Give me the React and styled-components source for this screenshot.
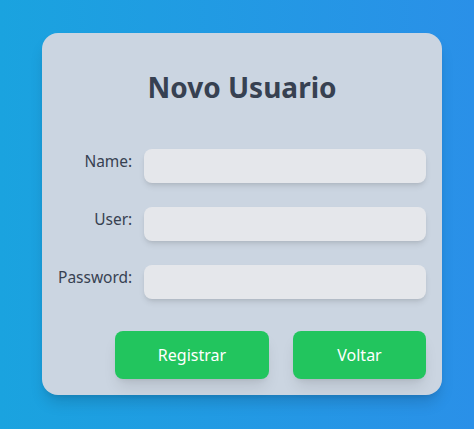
import React from "react";
import styled, { createGlobalStyle } from "styled-components";

const Global = createGlobalStyle`
  html, body { margin: 0; padding: 0; }
  body {
    font-family: "Noto Sans", "Open Sans", sans-serif;
    background: linear-gradient(90deg, #1aa3df 0%, #2a90e8 100%);
    min-height: 429px;
  }
`;

const Page = styled.div`
  min-height: 429px;
  box-sizing: border-box;
  padding: 33px 0 0 42px;
`;

const Card = styled.form`
  width: 400px;
  height: 362px;
  box-sizing: border-box;
  background: #cbd5e1;
  border-radius: 16px;
  padding: 38px 16px 16px 16px;
  box-shadow: 0 10px 15px -3px rgba(0,0,0,0.15), 0 4px 6px -4px rgba(0,0,0,0.12);
  display: flex;
  flex-direction: column;
`;

const Title = styled.h1`
  margin: 0;
  text-align: center;
  font-size: 28px;
  line-height: 32px;
  font-weight: 700;
  color: #374151;
`;

const Fields = styled.div`
  margin-top: 46px;
  display: grid;
  grid-template-columns: auto 1fr;
  column-gap: 12px;
  row-gap: 24px;
  align-items: start;
`;

const Label = styled.label`
  text-align: right;
  font-size: 15.5px;
  line-height: 22px;
  padding-top: 1px;
  color: #374151;
`;

const Input = styled.input`
  height: 34px;
  box-sizing: border-box;
  border: none;
  border-radius: 8px;
  background: #e5e7eb;
  box-shadow: 0 4px 6px -1px rgba(0,0,0,0.1), 0 2px 4px -2px rgba(0,0,0,0.1);
  outline: none;
  padding: 0 10px;
  font: inherit;
`;

const Actions = styled.div`
  margin-top: 32px;
  display: flex;
  justify-content: flex-end;
  gap: 24px;
`;

const Button = styled.button`
  width: ${(p) => p.$w}px;
  height: 48px;
  border: none;
  border-radius: 8px;
  background: #22c55e;
  color: #ffffff;
  font-family: inherit;
  font-size: 16px;
  box-shadow: 0 10px 15px -3px rgba(0,0,0,0.1), 0 4px 6px -4px rgba(0,0,0,0.1);
  cursor: pointer;
`;

export default function App() {
  return (
    <>
      <Global />
      <Page>
        <Card onSubmit={(e) => e.preventDefault()}>
          <Title>Novo Usuario</Title>
          <Fields>
            <Label htmlFor="name">Name:</Label>
            <Input id="name" type="text" />
            <Label htmlFor="user">User:</Label>
            <Input id="user" type="text" />
            <Label htmlFor="password">Password:</Label>
            <Input id="password" type="password" />
          </Fields>
          <Actions>
            <Button type="submit" $w={154}>Registrar</Button>
            <Button type="button" $w={133}>Voltar</Button>
          </Actions>
        </Card>
      </Page>
    </>
  );
}
